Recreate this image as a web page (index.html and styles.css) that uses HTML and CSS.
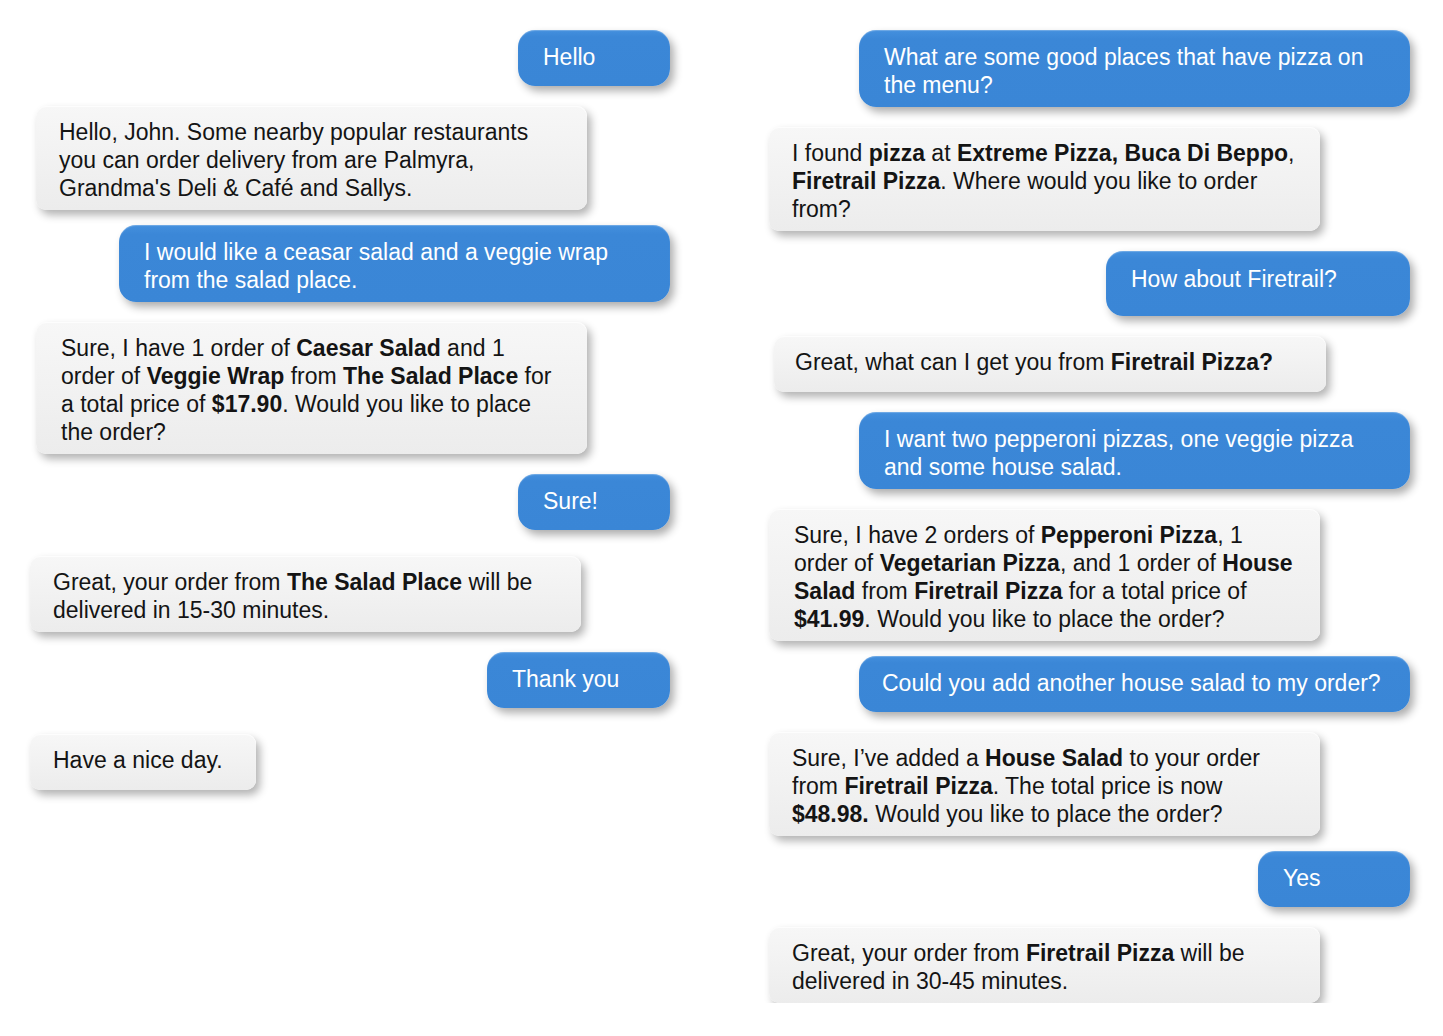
FILE: index.html
```html
<!DOCTYPE html>
<html lang="en">
<head>
<meta charset="utf-8">
<title>Chat transcripts</title>
<link rel="stylesheet" href="styles.css">
</head>
<body>
<main class="page">
  <section class="column column-left">
    <div class="bubble user w-152">Hello</div>
    <div class="bubble bot indent">Hello, John. Some nearby popular restaurants<br>you can order delivery from are Palmyra,<br>Grandma's Deli &amp; Café and Sallys.</div>
    <div class="bubble user wide snug">I would like a ceasar salad and a veggie wrap<br>from the salad place.</div>
    <div class="bubble bot indent roomy">Sure, I have 1 order of <b>Caesar Salad</b> and 1<br>order of <b>Veggie Wrap</b> from <b>The Salad Place</b> for<br>a total price of <b>$17.90</b>. Would you like to place<br>the order?</div>
    <div class="bubble user w-152">Sure!</div>
    <div class="bubble bot loose">Great, your order from <b>The Salad Place</b> will be<br>delivered in 15-30 minutes.</div>
    <div class="bubble user w-183">Thank you</div>
    <div class="bubble bot w-226 loose">Have a nice day.</div>
  </section>
  <section class="column column-right">
    <div class="bubble user wide">What are some good places that have pizza on<br>the menu?</div>
    <div class="bubble bot">I found <b>pizza</b> at <b>Extreme Pizza, Buca Di Beppo</b>,<br><b>Firetrail Pizza</b>. Where would you like to order<br>from?</div>
    <div class="bubble user w-304 tall">How about Firetrail?</div>
    <div class="bubble bot shifted w-552">Great, what can I get you from <b>Firetrail Pizza?</b></div>
    <div class="bubble user wide">I want two pepperoni pizzas, one veggie pizza<br>and some house salad.</div>
    <div class="bubble bot roomy">Sure, I have 2 orders of <b>Pepperoni Pizza</b>, 1<br>order of <b>Vegetarian Pizza</b>, and 1 order of <b>House<br>Salad</b> from <b>Firetrail Pizza</b> for a total price of<br><b>$41.99</b>. Would you like to place the order?</div>
    <div class="bubble user wide snug tight">Could you add another house salad to my order?</div>
    <div class="bubble bot">Sure, I’ve added a <b>House Salad</b> to your order<br>from <b>Firetrail Pizza</b>. The total price is now<br><b>$48.98.</b> Would you like to place the order?</div>
    <div class="bubble user w-152 snug">Yes</div>
    <div class="bubble bot">Great, your order from <b>Firetrail Pizza</b> will be<br>delivered in 30-45 minutes.</div>
  </section>
</main>
</body>
</html>
```

FILE: styles.css
```css
* {
  box-sizing: border-box;
}

html, body {
  margin: 0;
  background: #ffffff;
}

body {
  font-family: "Liberation Sans", Arial, Helvetica, sans-serif;
  font-size: 23px;
  line-height: 28px;
  color: #141414;
}

.page {
  display: flex;
  gap: 99px;
  padding: 30px 0 0 30px;
}

.column {
  display: flex;
  flex-direction: column;
  align-items: flex-start;
  gap: 20px;
}

.column-left {
  width: 640px;
}

.column-right {
  width: 641px;
}

.bubble {
  white-space: nowrap;
  min-height: 56px;
}

.bubble b {
  font-weight: 700;
}

.user {
  align-self: flex-end;
  color: #ffffff;
  background: linear-gradient(#4490de, #3b87d7 12%, #3a86d6);
  border-radius: 17px;
  padding: 13px 25px 8px;
  box-shadow: 4px 5px 8px rgba(0, 0, 0, 0.32),
              inset 0 1px 1px rgba(255, 255, 255, 0.25);
}

.bot {
  width: 551px;
  background: linear-gradient(#f7f7f7, #ececec);
  border-radius: 10px;
  padding: 12px 23px 8px;
  box-shadow: 4px 5px 8px rgba(0, 0, 0, 0.3),
              inset 0 1px 1px rgba(255, 255, 255, 0.8);
}

.wide {
  width: 551px;
}

.tight {
  padding-left: 23px;
}

.w-152 { width: 152px; }
.w-183 { width: 183px; }
.w-226 { width: 226px; }
.w-304 { width: 304px; }
.w-552 { width: 552px; }

.indent {
  margin-left: 6px;
}

.shifted {
  margin-left: 5px;
  padding-left: 21px;
}

.roomy {
  padding-left: 25px;
}

.tall {
  min-height: 65px;
  padding-top: 14px;
}

.snug {
  margin-top: -5px;
}

.loose {
  margin-top: 6px;
}
```
